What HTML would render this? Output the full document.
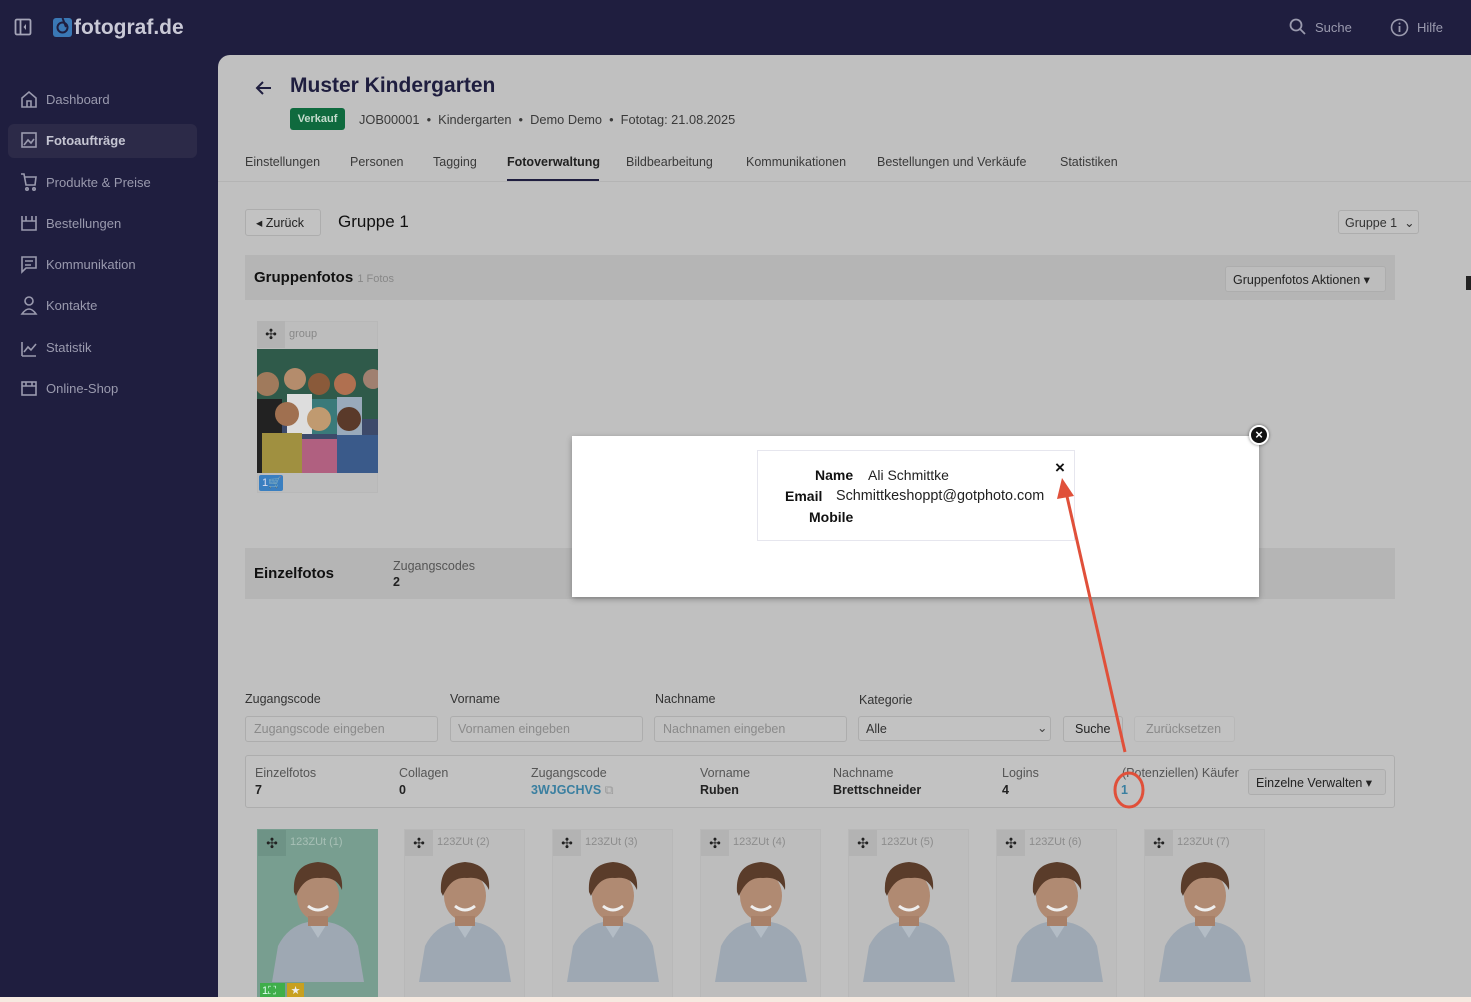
<!DOCTYPE html>
<html><head><meta charset="utf-8"><style>
*{box-sizing:border-box;margin:0;padding:0}
body{width:1471px;height:1002px;overflow:hidden;background:#1f1e3f;font-family:"Liberation Sans",sans-serif;position:relative;color:#222}
.a{position:absolute;white-space:nowrap}
.side{color:#9a9aae;font-size:13px}
.main{position:absolute;left:218px;top:55px;width:1253px;height:942px;background:#c0c0c0;border-top-left-radius:12px}
.t{font-size:12.5px;color:#3a3a3a}
.box{position:absolute;border:1px solid #adadad;border-radius:3px;background:#c2c2c2}
.ph{position:absolute;font-size:12.5px;color:#8a8a8a}
.lbl{font-size:12.5px;color:#555}
.val{font-size:12.5px;font-weight:bold;color:#222}
.card{position:absolute;top:829px;width:121px;height:170px;background:#bdbdbd;border:1px solid #b8b8b8}
.card .mv{position:absolute;left:0;top:0;width:28px;height:26px;background:#b3b3b3;text-align:center;line-height:26px;font-size:14px;color:#222}
.card .nm{position:absolute;left:32px;top:6px;font-size:11px;color:#8c8c8c}
.card svg{position:absolute;left:0;top:26px}
</style></head><body>
<svg width="0" height="0" style="position:absolute"><defs>
<symbol id="boy" viewBox="0 0 121 126">
<path d="M14 126 L20 90 Q30 70 50 66 L70 66 Q92 70 100 90 L106 126Z" fill="#9ea8b3"/>
<path d="M50 66 L60 82 L70 66Z" fill="#b3bcc5"/>
<ellipse cx="60" cy="40" rx="21" ry="25" fill="#b08a72"/>
<path d="M36 36 Q34 8 60 6 Q86 8 84 34 Q78 20 62 22 Q46 20 38 40Z" fill="#5a3c2a"/>
<rect x="50" y="60" width="20" height="10" fill="#a88068"/>
<path d="M50 50 Q60 58 70 50" stroke="#eee" stroke-width="3" fill="none"/>
</symbol>
</defs></svg>

<svg class="a" style="left:14px;top:18px" width="18" height="18" viewBox="0 0 18 18"><rect x="1.5" y="1.5" width="15" height="15" rx="1.5" fill="none" stroke="#a5a5b8" stroke-width="1.8"/><line x1="6.5" y1="2" x2="6.5" y2="16" stroke="#a5a5b8" stroke-width="1.8"/><path d="M12 6 L9.5 9 L12 12Z" fill="#a5a5b8"/></svg>
<svg class="a" style="left:53px;top:18px" width="19" height="19" viewBox="0 0 19 19"><rect width="19" height="19" rx="3" fill="#3a78b5"/><circle cx="9.5" cy="9.5" r="5" fill="none" stroke="#1f1e3f" stroke-width="2"/><path d="M9.5 0 L13 9" stroke="#1f1e3f" stroke-width="2"/></svg>
<div class="a" style="left:74px;top:16px;font-size:21px;font-weight:bold;color:#c9c9d6">fotograf.de</div>
<svg class="a" style="left:1289px;top:18px" width="18" height="18" viewBox="0 0 18 18"><circle cx="7" cy="7" r="5.5" fill="none" stroke="#9a9aae" stroke-width="1.8"/><line x1="11" y1="11" x2="16" y2="16" stroke="#9a9aae" stroke-width="1.8"/></svg>
<div class="a side" style="left:1315px;top:20px">Suche</div>
<svg class="a" style="left:1390px;top:18px" width="19" height="19" viewBox="0 0 19 19"><circle cx="9.5" cy="9.5" r="8" fill="none" stroke="#9a9aae" stroke-width="1.6"/><line x1="9.5" y1="8" x2="9.5" y2="14" stroke="#9a9aae" stroke-width="1.8"/><circle cx="9.5" cy="5.5" r="1" fill="#9a9aae"/></svg>
<div class="a side" style="left:1417px;top:20px">Hilfe</div>

<div class="a" style="left:8px;top:124px;width:189px;height:34px;background:#2c2a48;border-radius:6px"></div>
<div class="a side" style="left:46px;top:92px">Dashboard</div>
<div class="a side" style="left:46px;top:133px;font-weight:bold;color:#c5c5d2">Fotoaufträge</div>
<div class="a side" style="left:46px;top:175px">Produkte &amp; Preise</div>
<div class="a side" style="left:46px;top:216px">Bestellungen</div>
<div class="a side" style="left:46px;top:257px">Kommunikation</div>
<div class="a side" style="left:46px;top:298px">Kontakte</div>
<div class="a side" style="left:46px;top:340px">Statistik</div>
<div class="a side" style="left:46px;top:381px">Online-Shop</div>
<svg class="a" style="left:20px;top:90px" width="18" height="320" viewBox="0 0 18 320" fill="none" stroke="#9a9aae" stroke-width="1.6">
<path d="M2 8 L9 2 L16 8 V17 H2Z M7 17 V11 H11 V17"/>
<rect x="2" y="43" width="14" height="14"/><path d="M4 55 L8 50 L11 53 L14 49"/>
<path d="M1 84 H4 L6 95 H15 L16 87 H5"/><circle cx="7" cy="99" r="1.2"/><circle cx="14" cy="99" r="1.2"/>
<path d="M2 126 V140 H16 V126 M2 131 H16 M6 126 V131 M12 126 V131"/>
<path d="M2 167 H16 V178 H6 L2 182Z M5 171 H13 M5 175 H11"/>
<circle cx="9" cy="211" r="4"/><path d="M2 224 Q9 214 16 224Z"/>
<path d="M2 266 L2 252 M2 266 H16 M4 262 L8 257 L11 260 L16 254"/>
<rect x="2" y="292" width="14" height="13"/><path d="M2 296 H16 M6 292 V296 M12 292 V296"/>
</svg>

<div class="main"></div>
<svg class="a" style="left:255px;top:80px" width="18" height="16" viewBox="0 0 18 16"><path d="M16 8 H3 M8 2 L2 8 L8 14" stroke="#1f1e3f" stroke-width="2" fill="none"/></svg>
<div class="a" style="left:290px;top:74px;font-size:21px;font-weight:bold;color:#1f1e3f">Muster Kindergarten</div>
<div class="a" style="left:290px;top:108px;width:55px;height:22px;background:#0f6a3e;border-radius:3px;color:#c5dccd;font-size:11px;font-weight:bold;text-align:center;line-height:22px">Verkauf</div>
<div class="a t" style="left:359px;top:112px;font-size:12.8px">JOB00001 &nbsp;•&nbsp; Kindergarten &nbsp;•&nbsp; Demo Demo &nbsp;•&nbsp; Fototag: 21.08.2025</div>
<div class="a t" style="left:245px;top:155px">Einstellungen</div>
<div class="a t" style="left:350px;top:155px">Personen</div>
<div class="a t" style="left:433px;top:155px">Tagging</div>
<div class="a t" style="left:507px;top:155px;font-weight:bold;color:#222">Fotoverwaltung</div>
<div class="a" style="left:507px;top:179px;width:92px;height:2px;background:#1f1e3f"></div>
<div class="a t" style="left:626px;top:155px">Bildbearbeitung</div>
<div class="a t" style="left:746px;top:155px">Kommunikationen</div>
<div class="a t" style="left:877px;top:155px">Bestellungen und Verkäufe</div>
<div class="a t" style="left:1060px;top:155px">Statistiken</div>
<div class="a" style="left:218px;top:181px;width:1253px;height:1px;background:#b4b4b4"></div>

<div class="box" style="left:245px;top:209px;width:76px;height:27px"></div>
<div class="a" style="left:256px;top:215px;font-size:12.5px;color:#222">◂ Zurück</div>
<div class="a" style="left:338px;top:212px;font-size:17px;color:#111">Gruppe 1</div>
<div class="box" style="left:1338px;top:210px;width:81px;height:24px"></div>
<div class="a" style="left:1345px;top:215px;font-size:12.5px;color:#333">Gruppe 1 &nbsp;⌄</div>

<div class="a" style="left:245px;top:255px;width:1150px;height:45px;background:#b5b5b5"></div>
<div class="a" style="left:254px;top:269px;font-size:15px;font-weight:bold;color:#111">Gruppenfotos <span style="font-size:11px;font-weight:normal;color:#888">1 Fotos</span></div>
<div class="box" style="left:1225px;top:266px;width:161px;height:26px;background:#bdbdbd"></div>
<div class="a" style="left:1233px;top:272px;font-size:12.5px;color:#222">Gruppenfotos Aktionen ▾</div>

<div class="a" style="left:257px;top:321px;width:121px;height:172px;background:#bdbdbd;border:1px solid #b8b8b8"></div>
<div class="a" style="left:257px;top:321px;width:28px;height:27px;background:#b3b3b3;text-align:center;line-height:27px;font-size:14px">✣</div>
<div class="a" style="left:289px;top:328px;font-size:11px;color:#888">group</div>
<svg class="a" style="left:257px;top:349px" width="121" height="124" viewBox="0 0 121 124">
<rect width="121" height="124" fill="#2f5a4a"/>
<rect y="70" width="121" height="54" fill="#3d4a6a"/>
<circle cx="10" cy="35" r="12" fill="#a07a5c"/><circle cx="38" cy="30" r="11" fill="#b48c6c"/><circle cx="62" cy="35" r="11" fill="#8a5a3a"/><circle cx="88" cy="35" r="11" fill="#b07050"/><circle cx="116" cy="30" r="10" fill="#a08070"/>
<rect x="0" y="50" width="25" height="74" fill="#222"/><rect x="30" y="45" width="25" height="40" fill="#ddd"/><rect x="55" y="50" width="25" height="35" fill="#3a7a7a"/><rect x="80" y="48" width="25" height="40" fill="#9ab"/>
<circle cx="30" cy="65" r="12" fill="#a07050"/><circle cx="62" cy="70" r="12" fill="#c09a70"/><circle cx="92" cy="70" r="12" fill="#5a3a2a"/>
<rect x="5" y="84" width="40" height="40" fill="#a09040"/><rect x="45" y="90" width="35" height="34" fill="#b06080"/><rect x="80" y="86" width="41" height="38" fill="#3a5a8a"/>
</svg>
<div class="a" style="left:259px;top:475px;width:24px;height:16px;background:#3a7fc0;border-radius:2px;color:#dde;font-size:11px;line-height:16px;padding-left:3px">1🛒</div>

<div class="a" style="left:245px;top:548px;width:1150px;height:51px;background:#b5b5b5"></div>
<div class="a" style="left:254px;top:565px;font-size:15px;font-weight:bold;color:#111">Einzelfotos</div>
<div class="a lbl" style="left:393px;top:559px">Zugangscodes</div>
<div class="a val" style="left:393px;top:575px">2</div>

<div class="a lbl" style="left:245px;top:692px;color:#333">Zugangscode</div>
<div class="a lbl" style="left:450px;top:692px;color:#333">Vorname</div>
<div class="a lbl" style="left:655px;top:692px;color:#333">Nachname</div>
<div class="a lbl" style="left:859px;top:693px;color:#333">Kategorie</div>
<div class="box" style="left:245px;top:716px;width:193px;height:26px"></div><div class="ph" style="left:254px;top:722px">Zugangscode eingeben</div>
<div class="box" style="left:450px;top:716px;width:193px;height:26px"></div><div class="ph" style="left:458px;top:722px">Vornamen eingeben</div>
<div class="box" style="left:654px;top:716px;width:193px;height:26px"></div><div class="ph" style="left:663px;top:722px">Nachnamen eingeben</div>
<div class="box" style="left:858px;top:716px;width:193px;height:25px"></div><div class="ph" style="left:866px;top:722px;color:#333">Alle</div><div class="ph" style="left:1037px;top:720px;color:#444">⌄</div>
<div class="box" style="left:1063px;top:716px;width:60px;height:26px"></div><div class="ph" style="left:1075px;top:722px;color:#222">Suche</div>
<div class="box" style="left:1134px;top:716px;width:101px;height:26px;border-color:#b8b8b8"></div><div class="ph" style="left:1146px;top:722px">Zurücksetzen</div>

<div class="box" style="left:245px;top:755px;width:1150px;height:53px"></div>
<div class="a lbl" style="left:255px;top:766px">Einzelfotos</div><div class="a val" style="left:255px;top:783px">7</div>
<div class="a lbl" style="left:399px;top:766px">Collagen</div><div class="a val" style="left:399px;top:783px">0</div>
<div class="a lbl" style="left:531px;top:766px">Zugangscode</div><div class="a val" style="left:531px;top:783px;color:#3a7fa0">3WJGCHVS <span style="color:#999;font-weight:normal">⧉</span></div>
<div class="a lbl" style="left:700px;top:766px">Vorname</div><div class="a val" style="left:700px;top:783px">Ruben</div>
<div class="a lbl" style="left:833px;top:766px">Nachname</div><div class="a val" style="left:833px;top:783px">Brettschneider</div>
<div class="a lbl" style="left:1002px;top:766px">Logins</div><div class="a val" style="left:1002px;top:783px">4</div>
<div class="a lbl" style="left:1122px;top:766px">(Potenziellen) Käufer</div><div class="a val" style="left:1121px;top:783px;color:#3a7fa0">1</div>
<div class="box" style="left:1248px;top:769px;width:138px;height:26px;background:#bdbdbd"></div>
<div class="a" style="left:1256px;top:775px;font-size:12.5px;color:#222">Einzelne Verwalten ▾</div>

<div class="card" style="left:257px;background:#789e90;border-color:#789e90"><div class="mv" style="background:#6e9386">✣</div><div class="nm" style="color:#a8c0b6">123ZUt (1)</div><svg width="121" height="126"><use href="#boy"/></svg>
<div class="a" style="left:2px;top:153px;width:25px;height:16px;background:#3fae4a;color:#dfe;font-size:11px;padding-left:2px;line-height:16px">1⛶</div><div class="a" style="left:29px;top:153px;width:17px;height:16px;background:#c8a020;color:#eee;font-size:11px;text-align:center;line-height:16px">★</div></div>
<div class="card" style="left:404px"><div class="mv">✣</div><div class="nm">123ZUt (2)</div><svg width="121" height="126"><use href="#boy"/></svg></div>
<div class="card" style="left:552px"><div class="mv">✣</div><div class="nm">123ZUt (3)</div><svg width="121" height="126"><use href="#boy"/></svg></div>
<div class="card" style="left:700px"><div class="mv">✣</div><div class="nm">123ZUt (4)</div><svg width="121" height="126"><use href="#boy"/></svg></div>
<div class="card" style="left:848px"><div class="mv">✣</div><div class="nm">123ZUt (5)</div><svg width="121" height="126"><use href="#boy"/></svg></div>
<div class="card" style="left:996px"><div class="mv">✣</div><div class="nm">123ZUt (6)</div><svg width="121" height="126"><use href="#boy"/></svg></div>
<div class="card" style="left:1144px"><div class="mv">✣</div><div class="nm">123ZUt (7)</div><svg width="121" height="126"><use href="#boy"/></svg></div>

<div class="a" style="left:0;top:997px;width:1471px;height:5px;background:#f6e9e0"></div>
<div class="a" style="left:1466px;top:276px;width:5px;height:14px;background:#222"></div>

<div class="a" style="left:572px;top:436px;width:687px;height:161px;background:#fff;box-shadow:0 2px 6px rgba(0,0,0,.3)"></div>
<div class="a" style="left:1249px;top:425px;width:20px;height:20px;border-radius:50%;background:#111;border:2px solid #fff;box-shadow:0 0 3px rgba(0,0,0,.5);color:#fff;font-size:13px;font-weight:bold;text-align:center;line-height:16px">×</div>
<div class="a" style="left:757px;top:450px;width:318px;height:91px;border:1px solid #e6e6ee;background:#fff"></div>
<div class="a" style="left:815px;top:467px;font-size:14px;font-weight:bold;color:#111">Name</div>
<div class="a" style="left:868px;top:467px;font-size:14px;color:#222">Ali Schmittke</div>
<div class="a" style="left:785px;top:488px;font-size:14px;font-weight:bold;color:#111">Email</div>
<div class="a" style="left:836px;top:488px;font-size:14.4px;color:#222">Schmittkeshoppt@gotphoto.com</div>
<div class="a" style="left:809px;top:509px;font-size:14px;font-weight:bold;color:#111">Mobile</div>
<div class="a" style="left:1055px;top:458px;font-size:17px;font-weight:bold;color:#111">×</div>

<svg class="a" style="left:1050px;top:470px" width="100" height="340" viewBox="0 0 100 340">
<line x1="75" y1="282" x2="16" y2="22" stroke="#e0503a" stroke-width="3"/>
<path d="M12 8 L24 26 L7 29Z" fill="#e0503a"/>
<ellipse cx="79" cy="320" rx="14" ry="17" fill="none" stroke="#e0503a" stroke-width="3"/>
</svg>
</body></html>
